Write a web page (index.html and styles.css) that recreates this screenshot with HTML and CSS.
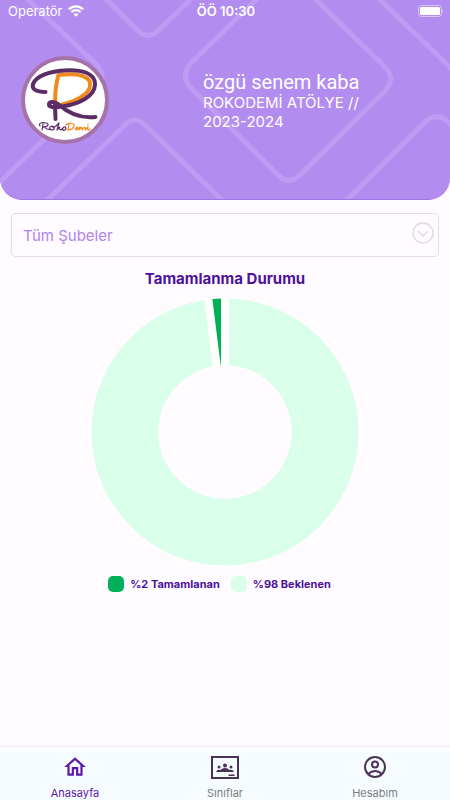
FILE: index.html
```
<!DOCTYPE html>
<html lang="tr">
<head>
  <meta charset="UTF-8">
  <meta name="viewport" content="width=device-width, initial-scale=1.0">
  <title>RokoDemi</title>
  <link rel="stylesheet" href="styles.css">
</head>
<body>
  <header class="header">
    <svg class="pattern" viewBox="0 0 450 200" preserveAspectRatio="xMidYMid slice" aria-hidden="true">
      <path d="M25 -3L97 65Q107 76 97 88L-3 185"/>
      <path d="M103 -4L137 30Q148 41 159 30L194 -4"/>
      <path d="M260 -4L190 64Q181 76 190 87L278 175Q289 186 300 175L386 90Q395 79 386 68L312 -4"/>
      <path d="M376 -4L454 71"/>
      <path d="M343 204L424 123Q435 112 446 120L454 128"/>
      <path d="M43 204L124 126Q135 114 146 126L226 204"/>
    </svg>

    <div class="status">
      <span class="carrier">Operatör
        <svg width="16" height="12" viewBox="0 0 16 12" aria-hidden="true">
          <g fill="none" stroke="#fff" stroke-width="2.300">
            <path d="M.8 4.300C5 .4 11 .4 15.200 4.300"/>
            <path d="M3.400 7.200C6.200 4.700 9.800 4.700 12.600 7.200"/>
          </g>
          <path fill="#fff" d="M5.600 9.300C7 8 9 8 10.400 9.300L8 11.800z"/>
        </svg>
      </span>
      <span class="clock">ÖÖ 10:30</span>
      <svg class="battery" width="27" height="12" viewBox="0 0 27 12" aria-hidden="true">
        <rect x="1.500" y=".5" width="23" height="11" rx="3" fill="none" stroke="#fff" stroke-opacity=".5"/>
        <rect x="3" y="2" width="20" height="8" rx="1.500" fill="#fff"/>
        <path d="M25.500 4q1.500 2 0 4z" fill="#fff" opacity=".6"/>
      </svg>
    </div>

    <div class="profile">
      <div class="avatar">
        <svg class="logo" viewBox="0 0 88 88" role="img" aria-label="RokoDemi">
          <g fill="none" stroke-linecap="round" stroke-linejoin="round">
            <path stroke="#f18a1c" stroke-width="4" d="M34 48C34 39 35 27 37.500 19C50 17.500 64 18 68.500 25C72 35 60 44 41 48.500"/>
            <path stroke="#5b2c65" stroke-width="4" d="M24.500 36C15 36 10.500 33 12 28C15 20 28 15.500 43 14.500C61 13.500 74 17 74 28C74 40 59 48 41 50.500C33 52 27.500 51 28 48C28.500 45 34 45.500 37 48C46 56 58 63 74.500 61"/>
            <path stroke="#5b2c65" stroke-width="4" d="M34 49L34.500 63"/>
          </g>
          <g fill="none" stroke-width="1.200" stroke-linecap="round" stroke-linejoin="round">
            <path stroke="#5b2c65" d="M19 70C17 67 21 66 25 67C29 68 27 71 22 71M22 68L21 74M22 71C25 71 26 75 29 73M31 70C28 70 28 74 31 74C34 74 34 70 31 70C31 72 34 71 35 70L38 67L36 74C38 70 41 71 37 72L40 74L43 71C40 73 42 75 44 74C46 72 44 70 43 71"/>
            <path stroke="#f18a1c" d="M48 68L47 74M45 69C48 66 54 67 53 70C52 74 48 74 46 74M54 73C58 72 57 70 55 72C54 75 57 74 59 71L58 74C60 71 61 70 61 74C63 71 65 70 64 74L67 71C66 74 67 75 69 73M67 69V68"/>
          </g>
        </svg>
      </div>
      <div class="info">
        <h1 class="name">özgü senem kaba</h1>
        <p class="school">ROKODEMİ ATÖLYE // 2023-2024</p>
      </div>
    </div>
  </header>

  <main class="content">
    <div class="branch">
      <select class="branch-select" aria-label="Şube">
        <option>Tüm Şubeler</option>
      </select>
      <svg class="branch-icon" width="22" height="22" viewBox="0 0 22 22" aria-hidden="true">
        <circle cx="11" cy="11" r="10"/>
        <path d="M6 9l5 5 5-5"/>
      </svg>
    </div>

    <h2 class="title">Tamamlanma Durumu</h2>

    <svg class="chart" viewBox="0 0 268 268" role="img" aria-label="%2 Tamamlanan, %98 Beklenen">
      <circle cx="134" cy="134" r="100" fill="none" stroke="#d9ffea" stroke-width="67"/>
      <path d="M134 134V.5A133.500 133.500 0 0 0 117.300 1.500Z" fill="#00b158"/>
      <path d="M134 134V-4M134 134L116.700 -4" stroke="#fff" stroke-width="8"/>
      <circle cx="134" cy="134" r="66.500" fill="#fffbff"/>
    </svg>

    <ul class="legend">
      <li><span class="swatch done"></span>%2 Tamamlanan</li>
      <li><span class="swatch waiting"></span>%98 Beklenen</li>
    </ul>
  </main>

  <nav class="tabs">
    <a href="#anasayfa" class="tab active">
      <svg width="26" height="26" viewBox="0 0 24 24" fill="currentColor" aria-hidden="true">
        <path d="M12 5.690l5 4.500V18h-2v-6H9v6H7v-7.810l5-4.500M12 3L2 12h3v8h6v-6h2v6h6v-8h3L12 3z"/>
      </svg>
      Anasayfa
    </a>
    <a href="#siniflar" class="tab">
      <svg width="28" height="26" viewBox="0 0 28 26" fill="#493357" aria-hidden="true">
        <rect x="1" y="3" width="26" height="21" fill="none" stroke="#493357" stroke-width="2"/>
        <circle cx="14" cy="11.500" r="2"/>
        <circle cx="8" cy="13" r="1.500"/>
        <circle cx="20" cy="13" r="1.500"/>
        <path d="M5 18q1-3 4.500-2 1.500-2 4.500-2t4.500 2q3.500-1 4.500 2z"/>
        <path d="M17.500 20.500h6v1.500h-6z"/>
      </svg>
      Sınıflar
    </a>
    <a href="#hesabim" class="tab">
      <svg width="28" height="26" viewBox="0 0 28 26" fill="none" stroke="#493357" stroke-width="2" aria-hidden="true">
        <circle cx="14" cy="13" r="10"/>
        <circle cx="14" cy="10.500" r="3"/>
        <path d="M7 20q7-6 14 0"/>
      </svg>
      Hesabım
    </a>
  </nav>
</body>
</html>
```
FILE: styles.css
```
* {
  box-sizing: border-box;
}
body {
  margin: 0;
  min-height: 100vh;
  display: flex;
  flex-direction: column;
  background-color: #fffbff;
  font-family: Inter, sans-serif;
}
h1, h2, p, ul {
  margin: 0;
  padding: 0;
}

.header {
  position: relative;
  height: 200px;
  overflow: hidden;
  color: #fff;
  background-color: #b38cf0;
  border-bottom: 1px solid #a273e5;
  border-radius: 0 0 22px 22px;
}
.pattern {
  position: absolute;
  top: 0;
  left: 0;
  width: 100%;
  height: 200px;
  fill: none;
  stroke: #bf9cf3;
  stroke-width: 5;
}
.status {
  position: relative;
  display: grid;
  grid-template-columns: 1fr auto 1fr;
  align-items: center;
  height: 22px;
  padding: 0 6px 0 8px;
  font-size: 13px;
}
.carrier {
  display: flex;
  align-items: center;
  gap: 5px;
}
.clock {
  font-weight: 600;
}
.battery {
  justify-self: end;
}
.profile {
  position: relative;
  display: grid;
  grid-template-columns: 182px 1fr;
  padding: 34px 60px 0 21px;
}
.avatar {
  width: 88px;
  height: 88px;
  overflow: hidden;
  background-color: #fff;
  border: 4px solid #a573a8;
  border-radius: 50%;
}
.logo {
  display: block;
  width: 88px;
  height: 88px;
  margin: -4px;
}
.info {
  padding-top: 15px;
}
.name {
  font-family: Roboto, sans-serif;
  font-size: 20px;
  font-weight: 400;
  line-height: 22px;
}
.school {
  max-width: 165px;
  font-size: 15px;
  line-height: 19px;
}

.content {
  flex: 1;
  display: flex;
  flex-direction: column;
  align-items: center;
  padding: 13px 11px 0;
}
.branch {
  position: relative;
  width: 100%;
}
.branch-select {
  display: block;
  width: 100%;
  height: 44px;
  padding: 0 40px 0 11px;
  appearance: none;
  color: #b084ea;
  background-color: transparent;
  border: 1px solid #e3dbe8;
  border-radius: 5px;
  font-family: inherit;
  font-size: 15px;
}
.branch-icon {
  position: absolute;
  top: 9px;
  right: 5px;
  fill: none;
  stroke: #e0d8e5;
  stroke-width: 1.4;
  pointer-events: none;
}
.title {
  margin-top: 12px;
  color: #4c1299;
  font-size: 15px;
  font-weight: 700;
  line-height: 20px;
}
.chart {
  width: 268px;
  height: 268px;
  margin-top: 9px;
}
.legend {
  display: flex;
  margin-top: 10px;
  list-style: none;
  color: #4c1299;
  font-size: 11px;
  font-weight: 700;
  line-height: 16px;
}
.legend li {
  display: flex;
  align-items: center;
  gap: 6px;
  margin-right: 11px;
}
.swatch {
  width: 16px;
  height: 16px;
  border-radius: 5px;
}
.done {
  background-color: #00b158;
}
.waiting {
  background-color: #d9ffea;
}

.tabs {
  display: grid;
  grid-template-columns: repeat(3, 1fr);
  height: 54px;
  background-color: #f6fcff;
  border-top: 1px solid #f3eaf0;
}
.tab {
  display: flex;
  flex-direction: column;
  align-items: center;
  gap: 6px;
  padding-top: 7px;
  color: #7d7c84;
  font-size: 11px;
  line-height: 14px;
  text-decoration: none;
}
.tab.active {
  color: #5d17ab;
}
```
